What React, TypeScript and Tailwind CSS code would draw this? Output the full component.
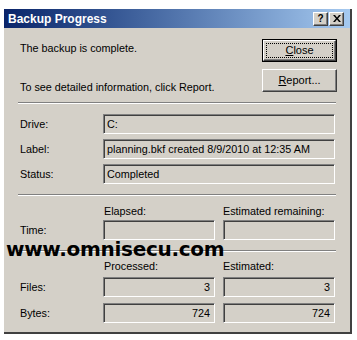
import React from 'react';

const raised =
    "border border-t-white border-l-white border-r-[#404040] border-b-[#404040] shadow-[inset_-1px_-1px_0_#808080]";

function Field({ value, right, className }: { value?: string; right?: boolean; className?: string }) {
    return (
        <div
            className={`h-[20px] border border-t-[#808080] border-l-[#808080] border-r-white border-b-white shadow-[inset_1px_1px_0_#404040] flex items-center pl-[3px] pr-[4px] text-[10.8px] text-black ${right ? 'justify-end' : ''} ${className ?? ''}`}
        >
            {value}
        </div>
    );
}

function Separator({ className }: { className: string }) {
    return <div className={`h-[2px] ml-[14px] mr-[14px] border-t border-b border-t-[#808080] border-b-white ${className}`} />;
}

function Row({ label, children, className }: { label: string; children: React.ReactNode; className?: string }) {
    return (
        <div className={`flex items-center pl-[16px] ${className ?? ''}`}>
            <div className="w-[83px] text-[10.8px] text-black">{label}</div>
            {children}
        </div>
    );
}

export default function App() {
    return (
        <div className="w-[357px] h-[340px] bg-white pt-[9px] pl-[4px] font-['Liberation_Sans',Arial,sans-serif]">
            <div className="w-[348px] h-[325px] bg-[#d4d0c8] border-r-2 border-b-2 border-r-[#404040] border-b-[#404040] flex flex-col relative">
                {/* title bar */}
                <div className="h-[19px] shrink-0 flex items-center justify-between pl-[4px] pr-[6px] bg-gradient-to-r from-[#0a246a] to-[#a6caf0]">
                    <span className="text-white font-bold text-[12px]">Backup Progress</span>
                    <div className="flex gap-[1px]">
                        <div className={`w-[15px] h-[14px] bg-[#d4d0c8] ${raised} flex items-center justify-center text-[10px] font-bold leading-none text-black`}>?</div>
                        <div className={`w-[15px] h-[14px] bg-[#d4d0c8] ${raised} flex items-center justify-center`}>
                            <svg width="8" height="7" viewBox="0 0 8 7">
                                <path d="M0 0h2l2 2.5L6 0h2L5 3.5 8 7H6L4 4.5 2 7H0l3-3.5z" fill="black" />
                            </svg>
                        </div>
                    </div>
                </div>

                {/* top section */}
                <div className="flex justify-between pt-[11px] pl-[16px] pr-[13px]">
                    <div className="flex flex-col text-[10.8px] leading-[16px] text-black">
                        <p className="mt-[1px]">The backup is complete.</p>
                        <p className="mt-[23px]">To see detailed information, click Report.</p>
                    </div>
                    <div className="flex flex-col gap-[7px]">
                        <button className="w-[75px] h-[23px] border border-black bg-[#d4d0c8] p-0">
                            <div className={`w-full h-full ${raised} flex items-center justify-center p-[2px]`}>
                                <div className="w-full h-full border border-dotted border-black flex items-center justify-center text-[11px] text-black">
                                    <span><u>C</u>lose</span>
                                </div>
                            </div>
                        </button>
                        <button className={`w-[75px] h-[23px] bg-[#d4d0c8] ${raised} flex items-center justify-center text-[11px] text-black`}>
                            <span><u>R</u>eport...</span>
                        </button>
                    </div>
                </div>

                <Separator className="mt-[7px]" />

                <div className="flex flex-col gap-[5px] mt-[10px]">
                    <Row label="Drive:"><Field value="C:" className="w-[232px]" /></Row>
                    <Row label="Label:"><Field value="planning.bkf created 8/9/2010 at 12:35 AM" className="w-[232px]" /></Row>
                    <Row label="Status:"><Field value="Completed" className="w-[232px]" /></Row>
                </div>

                <Separator className="mt-[10px]" />

                <div className="flex pl-[99px] mt-[8px] text-[10.8px] leading-[14px] text-black">
                    <div className="w-[120px] pl-[1px]">Elapsed:</div>
                    <div>Estimated remaining:</div>
                </div>
                <Row label="Time:" className="mt-[2px]">
                    <div className="flex gap-[8px]">
                        <Field className="w-[112px] h-[19px]" />
                        <Field className="w-[112px] h-[19px]" />
                    </div>
                </Row>

                <Separator className="mt-[10px]" />

                <div className="flex pl-[99px] mt-[8px] text-[10.8px] leading-[12px] text-black">
                    <div className="w-[120px] pl-[1px]">Processed:</div>
                    <div>Estimated:</div>
                </div>
                <Row label="Files:" className="mt-[5px]">
                    <div className="flex gap-[8px]">
                        <Field value="3" right className="w-[112px]" />
                        <Field value="3" right className="w-[112px]" />
                    </div>
                </Row>
                <Row label="Bytes:" className="mt-[6px]">
                    <div className="flex gap-[8px]">
                        <Field value="724" right className="w-[112px]" />
                        <Field value="724" right className="w-[112px]" />
                    </div>
                </Row>

                {/* watermark */}
                <div className="absolute left-[2px] top-[233px] text-[20px] leading-[14px] font-bold text-black font-['DejaVu_Sans',Verdana,sans-serif] tracking-[-0.3px]">
                    www.omnisecu.com
                </div>
            </div>
        </div>
    );
}
